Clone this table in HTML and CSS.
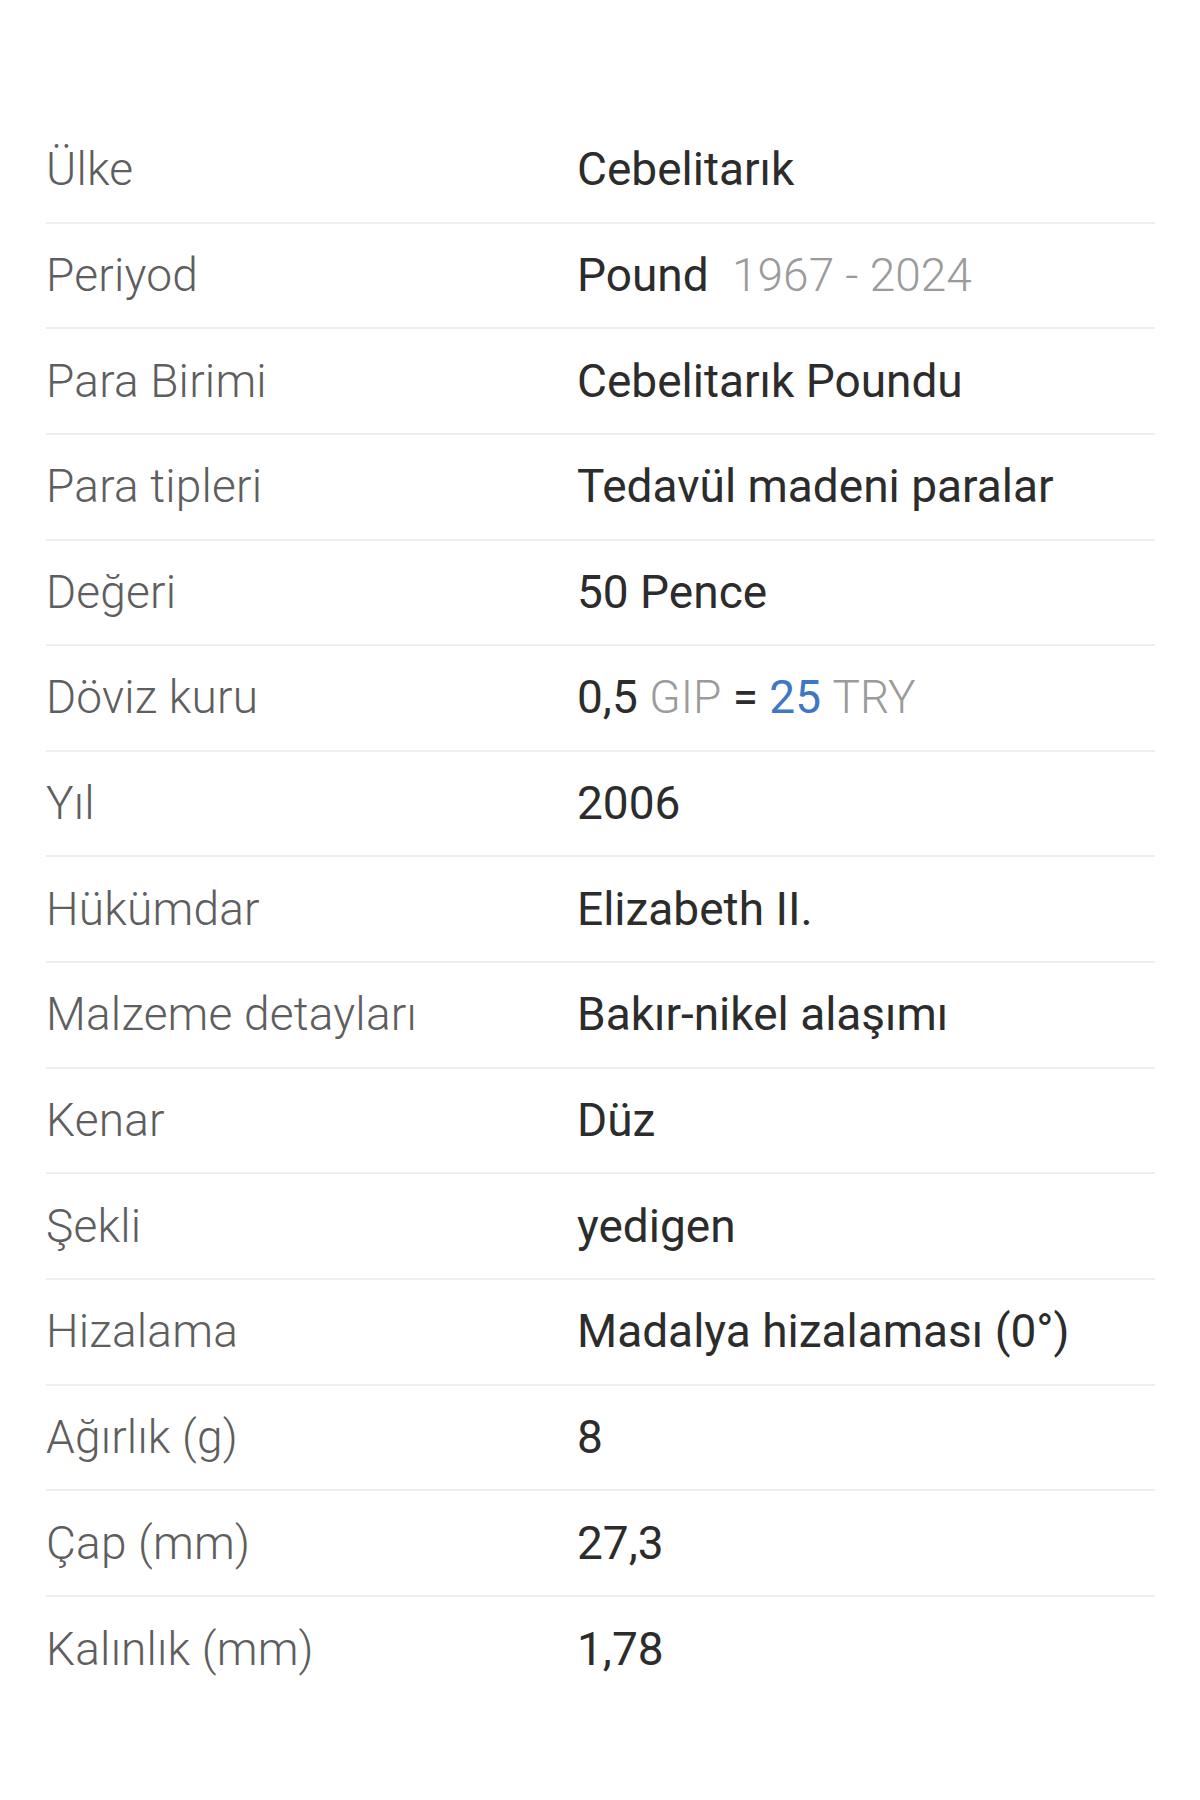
FILE: index.html
```html
<!DOCTYPE html>
<html lang="tr">
<head>
<meta charset="utf-8">
<title>Madeni para detayları</title>
<link rel="stylesheet" href="styles.css">
</head>
<body>
<div class="page">
  <div class="table">
    <div class="row"><div class="label">Ülke</div><div class="value">Cebelitarık</div></div>
    <div class="row"><div class="label">Periyod</div><div class="value">Pound <span class="muted period">1967 - 2024</span></div></div>
    <div class="row"><div class="label">Para Birimi</div><div class="value">Cebelitarık Poundu</div></div>
    <div class="row"><div class="label">Para tipleri</div><div class="value">Tedavül madeni paralar</div></div>
    <div class="row"><div class="label">Değeri</div><div class="value">50 Pence</div></div>
    <div class="row"><div class="label">Döviz kuru</div><div class="value">0,5 <span class="muted">GIP</span> = <span class="accent">25</span> <span class="muted">TRY</span></div></div>
    <div class="row"><div class="label">Yıl</div><div class="value">2006</div></div>
    <div class="row"><div class="label">Hükümdar</div><div class="value">Elizabeth II.</div></div>
    <div class="row"><div class="label">Malzeme detayları</div><div class="value">Bakır-nikel alaşımı</div></div>
    <div class="row"><div class="label">Kenar</div><div class="value">Düz</div></div>
    <div class="row"><div class="label">Şekli</div><div class="value">yedigen</div></div>
    <div class="row"><div class="label">Hizalama</div><div class="value">Madalya hizalaması (0°)</div></div>
    <div class="row"><div class="label">Ağırlık (g)</div><div class="value">8</div></div>
    <div class="row"><div class="label">Çap (mm)</div><div class="value">27,3</div></div>
    <div class="row"><div class="label">Kalınlık (mm)</div><div class="value">1,78</div></div>
  </div>
</div>
</body>
</html>
```

FILE: styles.css
```css
html, body {
  margin: 0;
  padding: 0;
  background: #ffffff;
}

body {
  font-family: Roboto, "Noto Sans", "Liberation Sans", sans-serif;
}

.page {
  width: 1200px;
  height: 1800px;
  padding: 118px 45px 0 46px;
  box-sizing: border-box;
}

.table {
  display: flex;
  flex-direction: column;
}

.row {
  display: grid;
  grid-template-columns: 531px 1fr;
  align-items: center;
  height: 105.65px;
  box-sizing: border-box;
  border-bottom: 2px solid #eeeeee;
  font-size: 46px;
  line-height: 1.2;
}

.row:last-child {
  border-bottom: none;
}

.label {
  color: #5e5e5e;
  font-weight: 300;
  letter-spacing: 0.2px;
}

.value {
  color: #2c2c2c;
  font-weight: 400;
}

.muted {
  color: #9b9b9b;
  font-weight: 300;
}

.period {
  margin-left: 12px;
}

.accent {
  color: #3e77c6;
}
```
